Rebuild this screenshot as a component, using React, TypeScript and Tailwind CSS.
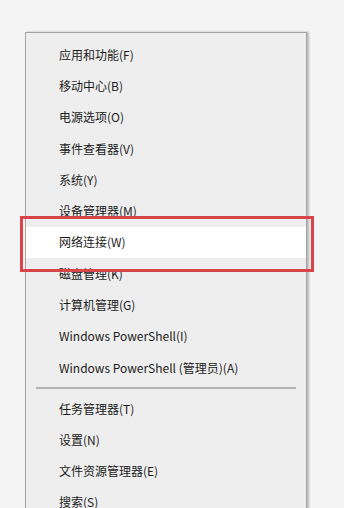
const groupA = [
  "应用和功能(F)",
  "移动中心(B)",
  "电源选项(O)",
  "事件查看器(V)",
  "系统(Y)",
  "设备管理器(M)",
  "网络连接(W)",
  "磁盘管理(K)",
  "计算机管理(G)",
  "Windows PowerShell(I)",
  "Windows PowerShell (管理员)(A)",
];

const groupB = ["任务管理器(T)", "设置(N)", "文件资源管理器(E)", "搜索(S)"];

function MenuRow({ label, active }: { label: string; active?: boolean }) {
  return (
    <div
      className={
        "h-[31.3px] flex items-center pl-[33px] text-[12px] text-[#1c1c1c] " +
        (active ? "bg-white" : "")
      }
    >
      {label}
    </div>
  );
}

export default function App() {
  return (
    <div
      className="relative w-[344px] h-[508px] overflow-hidden bg-[#f4f4f4]"
      style={{ fontFamily: '"Microsoft YaHei", "Noto Sans CJK SC", "Noto Sans", sans-serif' }}
    >
      <div className="ml-[25px] mt-[32px] w-[282px] h-[520px] bg-[#eeeeee] border border-[#a3a3a3] shadow-[2px_0_2px_rgba(0,0,0,0.25)] pt-[6px]">
        {groupA.map((item) => (
          <MenuRow key={item} label={item} active={item === "网络连接(W)"} />
        ))}
        <div className="h-[9.7px] flex items-center px-[10px]">
          <div className="w-full h-[2px] bg-[#b4b4b4]" />
        </div>
        {groupB.map((item) => (
          <MenuRow key={item} label={item} />
        ))}
      </div>

      {/* red annotation box */}
      <div className="absolute left-[20px] top-[216px] w-[294px] h-[56px] border-[3px] border-[#d9444a]" />
    </div>
  );
}
